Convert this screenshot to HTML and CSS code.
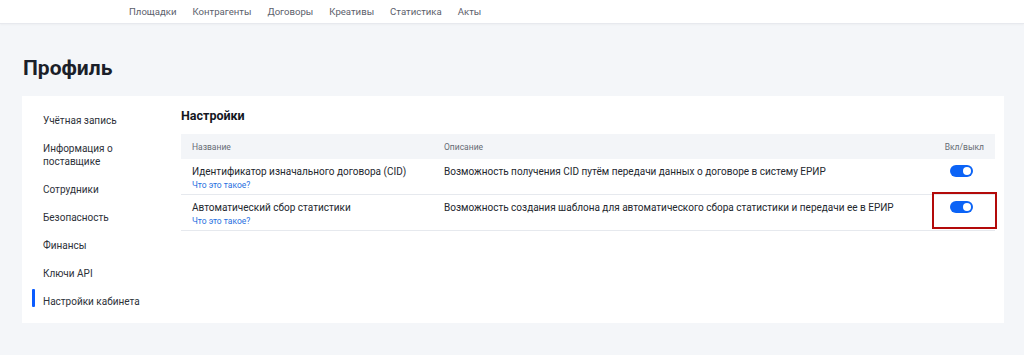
FILE: index.html
```html
<!DOCTYPE html>
<html lang="ru">
<head>
<meta charset="utf-8">
<title>Профиль</title>
<link rel="stylesheet" href="styles.css">
</head>
<body>
<header class="topbar">
  <nav class="nav">
    <a class="nav-link">Площадки</a>
    <a class="nav-link">Контрагенты</a>
    <a class="nav-link">Договоры</a>
    <a class="nav-link">Креативы</a>
    <a class="nav-link">Статистика</a>
    <a class="nav-link">Акты</a>
  </nav>
</header>
<main class="page">
  <h1 class="page-title">Профиль</h1>
  <section class="card">
    <aside class="side">
      <a class="side-item">Учётная запись</a>
      <a class="side-item">Информация о<br>поставщике</a>
      <a class="side-item">Сотрудники</a>
      <a class="side-item">Безопасность</a>
      <a class="side-item">Финансы</a>
      <a class="side-item">Ключи API</a>
      <a class="side-item active">Настройки кабинета</a>
    </aside>
    <div class="content">
      <h2 class="section-title">Настройки</h2>
      <div class="table">
        <div class="row head">
          <div class="cell c-name">Название</div>
          <div class="cell c-desc">Описание</div>
          <div class="cell c-tog">Вкл/выкл</div>
        </div>
        <div class="row">
          <div class="cell c-name">
            <div class="name">Идентификатор изначального договора (CID)</div>
            <a class="help">Что это такое?</a>
          </div>
          <div class="cell c-desc">Возможность получения CID путём передачи данных о договоре в систему ЕРИР</div>
          <div class="cell c-tog"><span class="toggle"></span></div>
        </div>
        <div class="row">
          <div class="cell c-name">
            <div class="name">Автоматический сбор статистики</div>
            <a class="help">Что это такое?</a>
          </div>
          <div class="cell c-desc">Возможность создания шаблона для автоматического сбора статистики и передачи ее в ЕРИР</div>
          <div class="cell c-tog"><span class="toggle"></span><span class="highlight"></span></div>
        </div>
      </div>
    </div>
  </section>
</main>
</body>
</html>
```
FILE: styles.css
```css
* { box-sizing: border-box; }
html, body { margin: 0; padding: 0; }
body {
  background: #f4f6f9;
  font-family: Roboto, "Liberation Sans", sans-serif;
  color: #2b2f36;
  width: 1024px;
  height: 355px;
  overflow: hidden;
}
.topbar {
  height: 24px;
  background: #fff;
  border-bottom: 1px solid #e7e9ee;
  box-shadow: 0 1px 2px rgba(0,0,0,0.03);
  display: flex;
  align-items: center;
  padding-left: 129px;
}
.nav { display: flex; gap: 16px; }
.nav-link { font-size: 9.6px; color: #5b606b; line-height: 14px; white-space: nowrap; }
.page { padding: 0 20px 0 22px; }
.page-title {
  margin: 0;
  padding-top: 32px;
  height: 72px;
  font-size: 21px;
  line-height: 25px;
  font-weight: 700;
  color: #1b1f29;
  padding-left: 1px;
}
.card {
  background: #fff;
  height: 227px;
  display: flex;
}
.side {
  width: 159px;
  padding: 11px 0 0 21px;
  display: flex;
  flex-direction: column;
}
.side-item {
  position: relative;
  display: block;
  font-size: 10px;
  line-height: 13px;
  padding: 7px 0 8px;
  color: #2d3139;
  white-space: nowrap;
}
.side-item.active::before {
  content: "";
  position: absolute;
  left: -11px;
  top: 1px;
  width: 3px;
  height: 18px;
  background: #0b5cff;
  border-radius: 1px;
}
.content {
  flex: 1;
  padding: 12px 9px 0 0;
}
.section-title {
  margin: 0 0 10px;
  font-size: 12.5px;
  line-height: 16px;
  font-weight: 700;
  color: #14171f;
}
.table { width: 814px; }
.row {
  display: flex;
  border-bottom: 1px solid #e6e9ee;
}
.row.head {
  background: #f3f5f8;
  height: 25px;
  align-items: center;
  border-bottom: none;
}
.head .cell {
  font-size: 8.5px;
  color: #666b74;
  padding-top: 0;
  padding-bottom: 0;
  line-height: 12px;
}
.row:not(.head) { height: 36px; }
.cell {
  padding: 6px 11px 3px;
  font-size: 10px;
  line-height: 14px;
  color: #23272e;
  white-space: nowrap;
}
.c-name { width: 252px; }
.c-desc { flex: 1; }
.c-tog {
  width: 64px;
  position: relative;
  display: flex;
  justify-content: flex-end;
}
.help {
  display: block;
  font-size: 8.5px;
  line-height: 12px;
  color: #1f6fe0;
}
.toggle {
  position: relative;
  display: block;
  width: 23px;
  height: 12px;
  margin-right: 11px;
  border-radius: 6px;
  background: #0b63f6;
}
.toggle::after {
  content: "";
  position: absolute;
  right: 2px;
  top: 2px;
  width: 8px;
  height: 8px;
  border-radius: 50%;
  background: #fff;
}
.highlight {
  position: absolute;
  left: 1px;
  top: -3px;
  width: 65px;
  height: 37px;
  border: 2px solid #b30a0a;
}
```
